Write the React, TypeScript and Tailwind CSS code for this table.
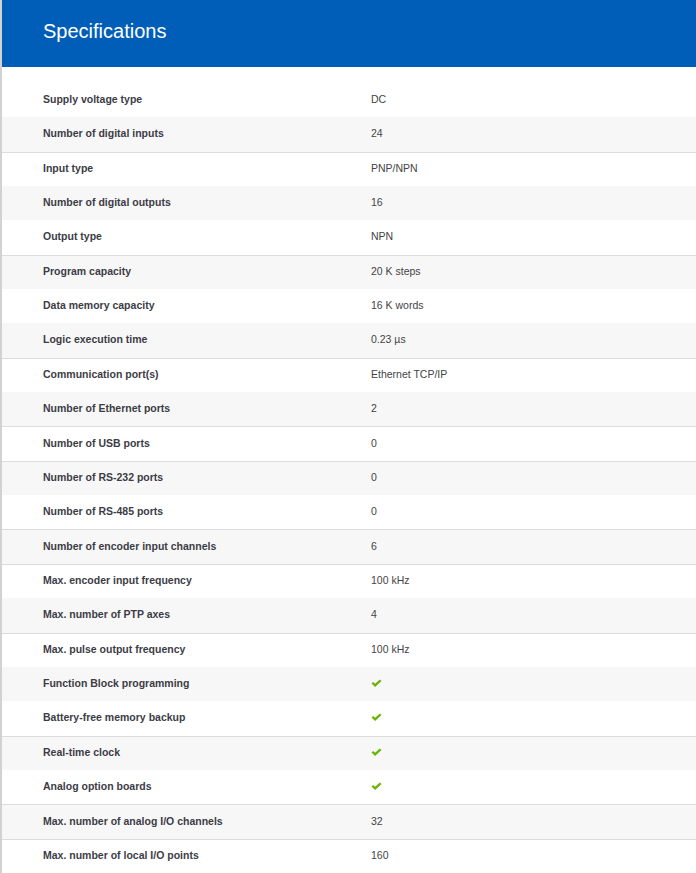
const CHECK = 'check';

const specs: { label: string; value: string; line?: boolean }[] = [
  { label: 'Supply voltage type', value: 'DC' },
  { label: 'Number of digital inputs', value: '24' },
  { label: 'Input type', value: 'PNP/NPN', line: true },
  { label: 'Number of digital outputs', value: '16' },
  { label: 'Output type', value: 'NPN' },
  { label: 'Program capacity', value: '20 K steps', line: true },
  { label: 'Data memory capacity', value: '16 K words' },
  { label: 'Logic execution time', value: '0.23 µs' },
  { label: 'Communication port(s)', value: 'Ethernet TCP/IP', line: true },
  { label: 'Number of Ethernet ports', value: '2' },
  { label: 'Number of USB ports', value: '0', line: true },
  { label: 'Number of RS-232 ports', value: '0', line: true },
  { label: 'Number of RS-485 ports', value: '0' },
  { label: 'Number of encoder input channels', value: '6', line: true },
  { label: 'Max. encoder input frequency', value: '100 kHz', line: true },
  { label: 'Max. number of PTP axes', value: '4' },
  { label: 'Max. pulse output frequency', value: '100 kHz', line: true },
  { label: 'Function Block programming', value: CHECK },
  { label: 'Battery-free memory backup', value: CHECK },
  { label: 'Real-time clock', value: CHECK, line: true },
  { label: 'Analog option boards', value: CHECK },
  { label: 'Max. number of analog I/O channels', value: '32', line: true },
  { label: 'Max. number of local I/O points', value: '160', line: true },
];

function Check() {
  return (
    <svg width="11" height="9" viewBox="0 0 11 9" className="block">
      <path d="M0.5 4.6 L2.2 3 L4.1 4.8 L8.8 0.4 L10.5 2 L4.1 8 Z" fill="#6ab406" />
    </svg>
  );
}

export default function App() {
  return (
    <div
      className="min-h-[873px] w-[696px] bg-white border-l-2 border-[#d2d2d2]"
      style={{ fontFamily: '"Liberation Sans", Arial, sans-serif' }}
    >
      {/* Header */}
      <div className="h-[67px] bg-[#005eb8] flex items-center pl-[41px] pb-[5px]">
        <h1 className="text-[20px] text-white leading-none">Specifications</h1>
      </div>

      {/* Spec table */}
      <div className="pt-4">
        {specs.map((row, i) => (
          <div
            key={row.label}
            className={`h-[34.35px] flex items-center text-[10.5px] pl-[41px] pb-[1px] ${
              i % 2 === 1 ? 'bg-[#f7f7f7]' : 'bg-white'
            } ${row.line ? 'border-t border-[#dcdcdc]' : ''}`}
          >
            <div className="w-[328px] font-bold text-[#3c3c46]">{row.label}</div>
            <div className="text-[#444]">
              {row.value === CHECK ? <Check /> : row.value}
            </div>
          </div>
        ))}
      </div>
    </div>
  );
}
